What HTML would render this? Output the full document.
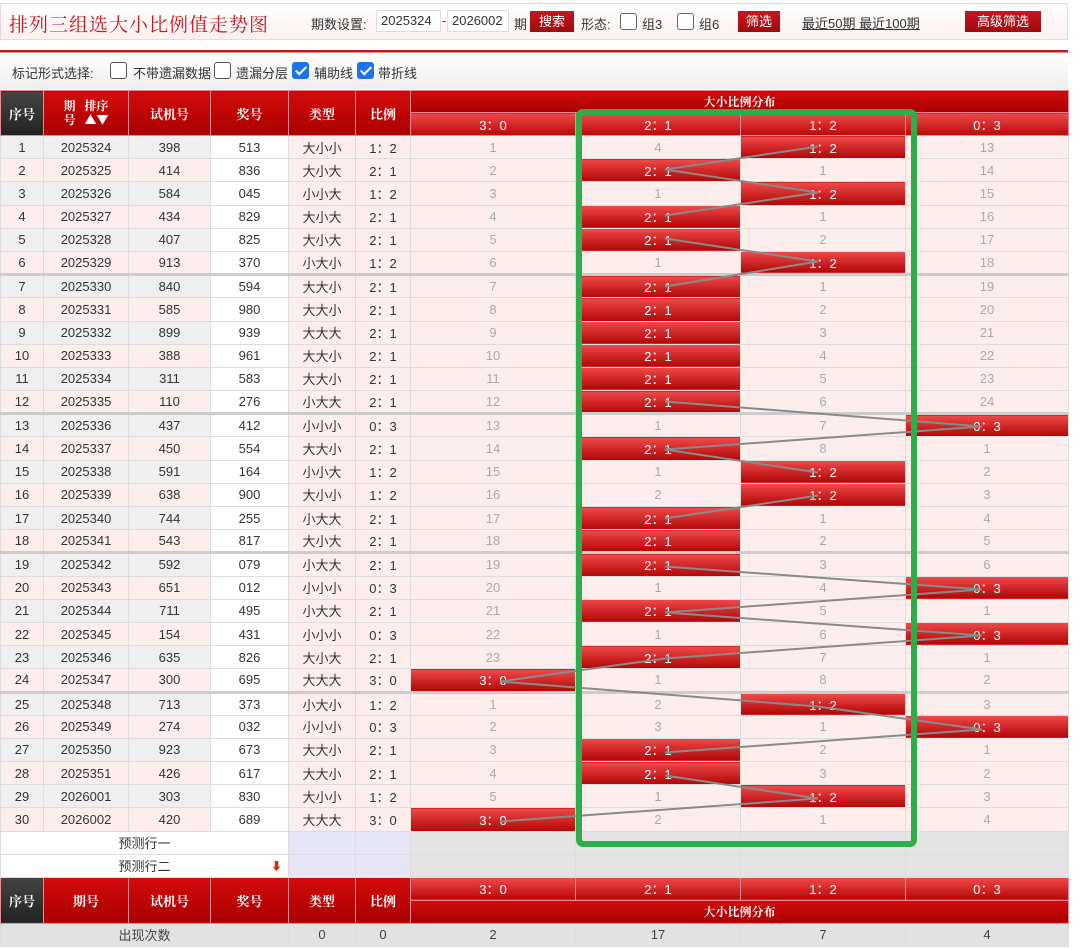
<!DOCTYPE html>
<html><head><meta charset="utf-8"><style>
*{margin:0;padding:0;box-sizing:border-box}
body{width:1080px;height:948px;overflow:hidden;background:#fff;font-family:"Liberation Sans","Noto Sans CJK SC",sans-serif;position:relative;color:#333}
.top{position:absolute;left:0;top:3px;width:1068px;height:37px;border:1px solid #f0d6d6;background:linear-gradient(#fff,#fdf0f0);font-size:13px}
.top span,.top div{position:absolute}
.title{left:8px;top:6px;font-size:19px;color:#c8161d;font-family:"Noto Serif CJK SC",serif;letter-spacing:1px}
.inp{height:22px;border:1px solid #ddd;background:#fff;top:6px;font-size:13px;line-height:20px;padding-left:4px;color:#333}
.btn{background:linear-gradient(#c8161d,#9e0a0f);color:#fff;height:21px;top:7px;text-align:center;line-height:21px;font-size:13px}
.cb{width:17px;height:17px;border:1px solid #666;border-radius:3px;background:#fff;top:9px}
.redline{position:absolute;left:0;top:50px;width:1068px;height:3px;background:#c8161d;border-bottom:1px solid #e88}
.opt{position:absolute;left:0;top:54px;width:1068px;height:35px;background:linear-gradient(#fff,#eee);font-size:13px}
.opt span,.opt i{position:absolute;top:9px}
.opt i{width:17px;height:17px;border:1px solid #555;border-radius:3px;background:#fff;top:8px}
.opt i.on{background:#1e73e8;border-color:#1e73e8}
.opt i.on:after{content:"";position:absolute;left:5px;top:1px;width:4px;height:9px;border:solid #fff;border-width:0 2px 2px 0;transform:rotate(45deg)}
table{position:absolute;left:0;top:90px;border-collapse:collapse;table-layout:fixed;width:1068px;font-size:13px}
td{text-align:center;border:1px solid #ddd;height:23px;padding:0;white-space:nowrap;overflow:hidden}
tr.o td,tr.e td{height:23.2px}
.h td{color:#fff;background:linear-gradient(#d40b0b,#a80000);border-color:#e89;font-weight:bold;font-family:"Noto Serif CJK SC",serif}
.h td.dk{background:linear-gradient(#444,#222)}
.h td.sub{background:linear-gradient(#f04a4a,#b80808);font-weight:normal;font-family:"Liberation Sans",sans-serif}
tr.o td{background:#efefef}
tr.e td{background:#fdeeee}
tr.o td.w,tr.e td.w{background:#fff}
tr.o td.p{background:#fdeeee}
td.d{background:#fdeeee!important;color:#aaa}
td.r{background:linear-gradient(#f04a4a,#b00606)!important;color:#fff}
tr.s td{border-top:3px solid #ccc}
tr.pr td{background:#e4e4e4;color:#333}
tr.pr td.w{background:#fff}
tr.pr td.l{background:#e6e6f6}
tr.cnt td{background:#e2e2e2;color:#444}
svg{position:absolute;left:0;top:0}
</style></head><body>
<div class="top">
<div class="title">排列三组选大小比例值走势图</div>
<span style="left:310px;top:10px">期数设置:</span>
<div class="inp" style="left:375px;width:65px">2025324</div>
<span style="left:441px;top:9px">-</span>
<div class="inp" style="left:446px;width:62px">2026002</div>
<span style="left:513px;top:10px">期</span>
<div class="btn" style="left:529px;width:44px">搜索</div>
<span style="left:580px;top:10px">形态:</span>
<div class="cb" style="left:619px"></div><span style="left:641px;top:10px">组3</span>
<div class="cb" style="left:676px"></div><span style="left:698px;top:10px">组6</span>
<div class="btn" style="left:737px;width:42px">筛选</div>
<span style="left:801px;top:9px;text-decoration:underline">最近50期 最近100期</span>
<div class="btn" style="left:964px;width:76px">高级筛选</div>
</div>
<div class="redline"></div>
<div class="opt">
<span style="left:12px">标记形式选择:</span>
<i style="left:110px"></i><span style="left:133px">不带遗漏数据</span>
<i style="left:214px"></i><span style="left:236px">遗漏分层</span>
<i class="on" style="left:292px"></i><span style="left:314px">辅助线</span>
<i class="on" style="left:357px"></i><span style="left:378px">带折线</span>
</div>
<table>
<colgroup><col style="width:43px"><col style="width:85px"><col style="width:82px"><col style="width:78px"><col style="width:67px"><col style="width:55px"><col style="width:165px"><col style="width:165px"><col style="width:165px"><col style="width:163px"></colgroup>
<tr class="h" style="height:22px"><td class="dk" rowspan="2">序号</td><td rowspan="2" style="font-size:12px;line-height:14px">期 &nbsp;&nbsp;排序<br>号 &nbsp;&nbsp;▲▼</td><td rowspan="2">试机号</td><td rowspan="2">奖号</td><td rowspan="2">类型</td><td rowspan="2">比例</td><td colspan="4" style="font-size:12px;height:22px">大小比例分布</td></tr>
<tr class="h"><td class="sub">3：0</td><td class="sub">2：1</td><td class="sub">1：2</td><td class="sub">0：3</td></tr>
<tr class="o"><td>1</td><td>2025324</td><td>398</td><td class="w">513</td><td class="p">大小小</td><td class="p">1：2</td><td class="d">1</td><td class="d">4</td><td class="r">1：2</td><td class="d">13</td></tr>
<tr class="e"><td>2</td><td>2025325</td><td>414</td><td class="w">836</td><td>大小大</td><td>2：1</td><td class="d">2</td><td class="r">2：1</td><td class="d">1</td><td class="d">14</td></tr>
<tr class="o"><td>3</td><td>2025326</td><td>584</td><td class="w">045</td><td class="p">小小大</td><td class="p">1：2</td><td class="d">3</td><td class="d">1</td><td class="r">1：2</td><td class="d">15</td></tr>
<tr class="e"><td>4</td><td>2025327</td><td>434</td><td class="w">829</td><td>大小大</td><td>2：1</td><td class="d">4</td><td class="r">2：1</td><td class="d">1</td><td class="d">16</td></tr>
<tr class="o"><td>5</td><td>2025328</td><td>407</td><td class="w">825</td><td class="p">大小大</td><td class="p">2：1</td><td class="d">5</td><td class="r">2：1</td><td class="d">2</td><td class="d">17</td></tr>
<tr class="e"><td>6</td><td>2025329</td><td>913</td><td class="w">370</td><td>小大小</td><td>1：2</td><td class="d">6</td><td class="d">1</td><td class="r">1：2</td><td class="d">18</td></tr>
<tr class="o s"><td>7</td><td>2025330</td><td>840</td><td class="w">594</td><td class="p">大大小</td><td class="p">2：1</td><td class="d">7</td><td class="r">2：1</td><td class="d">1</td><td class="d">19</td></tr>
<tr class="e"><td>8</td><td>2025331</td><td>585</td><td class="w">980</td><td>大大小</td><td>2：1</td><td class="d">8</td><td class="r">2：1</td><td class="d">2</td><td class="d">20</td></tr>
<tr class="o"><td>9</td><td>2025332</td><td>899</td><td class="w">939</td><td class="p">大大大</td><td class="p">2：1</td><td class="d">9</td><td class="r">2：1</td><td class="d">3</td><td class="d">21</td></tr>
<tr class="e"><td>10</td><td>2025333</td><td>388</td><td class="w">961</td><td>大大小</td><td>2：1</td><td class="d">10</td><td class="r">2：1</td><td class="d">4</td><td class="d">22</td></tr>
<tr class="o"><td>11</td><td>2025334</td><td>311</td><td class="w">583</td><td class="p">大大小</td><td class="p">2：1</td><td class="d">11</td><td class="r">2：1</td><td class="d">5</td><td class="d">23</td></tr>
<tr class="e"><td>12</td><td>2025335</td><td>110</td><td class="w">276</td><td>小大大</td><td>2：1</td><td class="d">12</td><td class="r">2：1</td><td class="d">6</td><td class="d">24</td></tr>
<tr class="o s"><td>13</td><td>2025336</td><td>437</td><td class="w">412</td><td class="p">小小小</td><td class="p">0：3</td><td class="d">13</td><td class="d">1</td><td class="d">7</td><td class="r">0：3</td></tr>
<tr class="e"><td>14</td><td>2025337</td><td>450</td><td class="w">554</td><td>大大小</td><td>2：1</td><td class="d">14</td><td class="r">2：1</td><td class="d">8</td><td class="d">1</td></tr>
<tr class="o"><td>15</td><td>2025338</td><td>591</td><td class="w">164</td><td class="p">小小大</td><td class="p">1：2</td><td class="d">15</td><td class="d">1</td><td class="r">1：2</td><td class="d">2</td></tr>
<tr class="e"><td>16</td><td>2025339</td><td>638</td><td class="w">900</td><td>大小小</td><td>1：2</td><td class="d">16</td><td class="d">2</td><td class="r">1：2</td><td class="d">3</td></tr>
<tr class="o"><td>17</td><td>2025340</td><td>744</td><td class="w">255</td><td class="p">小大大</td><td class="p">2：1</td><td class="d">17</td><td class="r">2：1</td><td class="d">1</td><td class="d">4</td></tr>
<tr class="e"><td>18</td><td>2025341</td><td>543</td><td class="w">817</td><td>大小大</td><td>2：1</td><td class="d">18</td><td class="r">2：1</td><td class="d">2</td><td class="d">5</td></tr>
<tr class="o s"><td>19</td><td>2025342</td><td>592</td><td class="w">079</td><td class="p">小大大</td><td class="p">2：1</td><td class="d">19</td><td class="r">2：1</td><td class="d">3</td><td class="d">6</td></tr>
<tr class="e"><td>20</td><td>2025343</td><td>651</td><td class="w">012</td><td>小小小</td><td>0：3</td><td class="d">20</td><td class="d">1</td><td class="d">4</td><td class="r">0：3</td></tr>
<tr class="o"><td>21</td><td>2025344</td><td>711</td><td class="w">495</td><td class="p">小大大</td><td class="p">2：1</td><td class="d">21</td><td class="r">2：1</td><td class="d">5</td><td class="d">1</td></tr>
<tr class="e"><td>22</td><td>2025345</td><td>154</td><td class="w">431</td><td>小小小</td><td>0：3</td><td class="d">22</td><td class="d">1</td><td class="d">6</td><td class="r">0：3</td></tr>
<tr class="o"><td>23</td><td>2025346</td><td>635</td><td class="w">826</td><td class="p">大小大</td><td class="p">2：1</td><td class="d">23</td><td class="r">2：1</td><td class="d">7</td><td class="d">1</td></tr>
<tr class="e"><td>24</td><td>2025347</td><td>300</td><td class="w">695</td><td>大大大</td><td>3：0</td><td class="r">3：0</td><td class="d">1</td><td class="d">8</td><td class="d">2</td></tr>
<tr class="o s"><td>25</td><td>2025348</td><td>713</td><td class="w">373</td><td class="p">小大小</td><td class="p">1：2</td><td class="d">1</td><td class="d">2</td><td class="r">1：2</td><td class="d">3</td></tr>
<tr class="e"><td>26</td><td>2025349</td><td>274</td><td class="w">032</td><td>小小小</td><td>0：3</td><td class="d">2</td><td class="d">3</td><td class="d">1</td><td class="r">0：3</td></tr>
<tr class="o"><td>27</td><td>2025350</td><td>923</td><td class="w">673</td><td class="p">大大小</td><td class="p">2：1</td><td class="d">3</td><td class="r">2：1</td><td class="d">2</td><td class="d">1</td></tr>
<tr class="e"><td>28</td><td>2025351</td><td>426</td><td class="w">617</td><td>大大小</td><td>2：1</td><td class="d">4</td><td class="r">2：1</td><td class="d">3</td><td class="d">2</td></tr>
<tr class="o"><td>29</td><td>2026001</td><td>303</td><td class="w">830</td><td class="p">大小小</td><td class="p">1：2</td><td class="d">5</td><td class="d">1</td><td class="r">1：2</td><td class="d">3</td></tr>
<tr class="e"><td>30</td><td>2026002</td><td>420</td><td class="w">689</td><td>大大大</td><td>3：0</td><td class="r">3：0</td><td class="d">2</td><td class="d">1</td><td class="d">4</td></tr>
<tr class="pr"><td class="w" colspan="4">预测行一</td><td class="l"></td><td class="l"></td><td></td><td></td><td></td><td></td></tr>
<tr class="pr"><td class="w" colspan="4" style="position:relative">预测行二<span style="position:absolute;right:6px;top:3px;color:#c8340d;font-size:11px">&#x2B07;</span></td><td class="l"></td><td class="l"></td><td></td><td></td><td></td><td></td></tr>
<tr class="h" style="height:22px"><td class="dk" rowspan="2">序号</td><td rowspan="2">期号</td><td rowspan="2">试机号</td><td rowspan="2">奖号</td><td rowspan="2">类型</td><td rowspan="2">比例</td><td class="sub" style="height:22px">3：0</td><td class="sub">2：1</td><td class="sub">1：2</td><td class="sub">0：3</td></tr>
<tr class="h"><td colspan="4" style="font-size:12px">大小比例分布</td></tr>
<tr class="cnt"><td colspan="4">出现次数</td><td>0</td><td>0</td><td>2</td><td>17</td><td>7</td><td>4</td></tr>
</table>
<svg width="1080" height="948">
<g fill="none" stroke="#8a8a8a" stroke-width="2">
<polyline points="818,146.5 665,169.5 818,192.5 665,215.5"/>
<polyline points="665,238.5 818,261.5 665,286.5"/>
<polyline points="665,401.5 982,426.5 665,449.5 818,472.5"/>
<polyline points="818,495.5 665,518.5"/>
<polyline points="665,566.5 982,589.5 665,612.5 982,635.5 665,658.5 500,681.5 818,706.5 982,729.5 665,752.5"/>
<polyline points="665,775.5 818,798.5 500,821.5"/>
</g>
<rect x="579" y="112" width="335" height="732" rx="4" fill="none" stroke="#2eae48" stroke-width="6"/>
</svg>
</body></html>
